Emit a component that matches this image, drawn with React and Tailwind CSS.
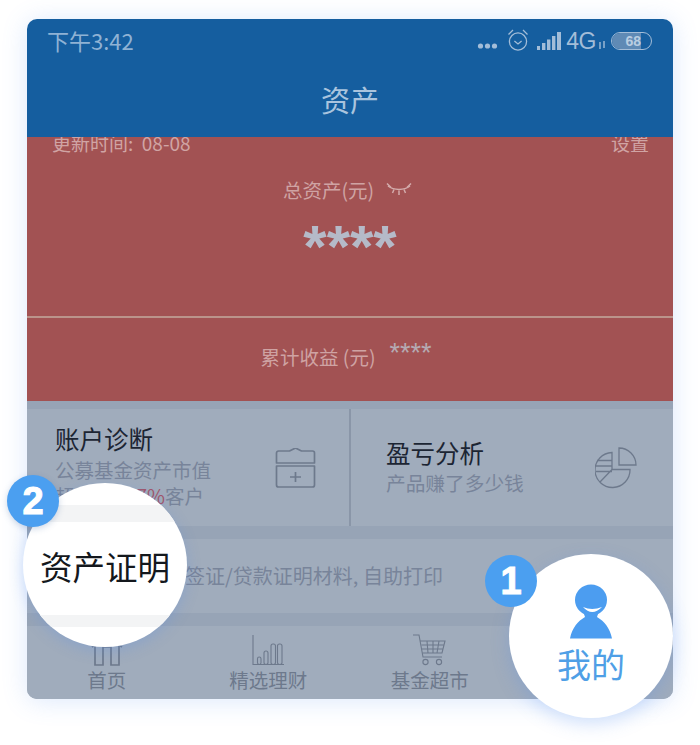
import React from 'react'

const CJK = 'font-["Noto_Sans_CJK_SC","Noto_Sans",sans-serif]'

function StatusIcons() {
  return (
    <div className="flex items-center">
      {/* dots */}
      <svg width="22" height="8" viewBox="0 0 22 8" fill="#a3bdd8" className="mt-[9px] mr-[7px]">
        <circle cx="3.5" cy="4" r="2.6" />
        <circle cx="10.5" cy="4" r="2.6" />
        <circle cx="17.5" cy="4" r="2.6" />
      </svg>
      {/* alarm */}
      <svg width="24" height="24" viewBox="0 0 24 24" fill="none" stroke="#a3bdd8" strokeWidth="1.3" className="mb-[3px] mr-[7px]">
        <circle cx="12" cy="13.5" r="8.6" />
        <path d="M8.4 13l3.6 3 3.6-3" />
        <path d="M2.5 6.5L7 2M21.5 6.5L17 2" />
      </svg>
      {/* signal */}
      <svg width="25" height="18" viewBox="0 0 25 18" fill="#a3bdd8" className="mr-[4px]">
        <rect x="0" y="14" width="3" height="4" />
        <rect x="5" y="11" width="3.4" height="7" />
        <rect x="10" y="7.5" width="3.4" height="10.5" />
        <rect x="15" y="4" width="3.4" height="14" />
        <rect x="20" y="0" width="4" height="18" />
      </svg>
      <span className="text-[#a3bdd8] text-[23px] leading-none font-['Liberation_Sans',sans-serif] tracking-[-0.5px]">4G</span>
      {/* up and down arrows */}
      <svg width="8" height="8" viewBox="0 0 8 8" stroke="#a3bdd8" strokeWidth="1.4" className="mt-[7px] ml-[2px] mr-[5px]">
        <path d="M2 1v7M6 0v7" />
      </svg>
      {/* battery */}
      <div className="w-[41px] h-[18px] rounded-full border-[1.5px] border-[#a3bdd8] flex items-center overflow-hidden">
        <div className="w-[29px] h-full bg-[#5f8ab5] rounded-l-full flex items-center justify-end">
          <span className="text-[#b9cde1] text-[14px] font-bold leading-none font-['Liberation_Sans',sans-serif]">68</span>
        </div>
      </div>
    </div>
  )
}

function ClosedEye() {
  return (
    <svg width="26" height="14" viewBox="0 0 26 14" fill="none" stroke="#d3abab" strokeWidth="1.5">
      <path d="M2 3c6 4.5 16 4.5 22 0" />
      <path d="M1 0.5l4 4M25 0.5l-4 4M8 6.5L6.5 10M18 6.5L19.5 10M13 7.5V12" />
    </svg>
  )
}

function CalendarPlus() {
  return (
    <svg width="42" height="42" viewBox="0 0 42 42" fill="none" stroke="#6d798c" strokeWidth="1.7" strokeLinejoin="round">
      <path d="M1.5 15V5a2 2 0 0 1 2-2h11l6-3 6 3h11a2 2 0 0 1 2 2v10z" />
      <path d="M1.5 18h38v19a2 2 0 0 1-2 2h-34a2 2 0 0 1-2-2z" />
      <path d="M20.5 24v10M15 29h11" />
    </svg>
  )
}

function PieIcon() {
  return (
    <svg width="42" height="42" viewBox="0 0 42 42" fill="none" stroke="#6d798c" strokeWidth="1.3">
      <path d="M24 1a17 17 0 0 1 17 17H24z" />
      <path d="M17 5.5v17h18A17.5 17.5 0 1 1 17 5.5z" />
      <path d="M2 13.5h15M1 19h16M1 24.5h16M5 35l12-12.5" />
    </svg>
  )
}

function HomeIcon() {
  return (
    <svg width="32" height="31" viewBox="0 0 32 31" fill="none" stroke="#6d798c" strokeWidth="1.7">
      <path d="M1 12L16 1l15 11" />
      <path d="M4 9v21h8V12h8v18h8V9" />
    </svg>
  )
}

function BarsIcon() {
  return (
    <svg width="32" height="31" viewBox="0 0 32 31" fill="none" stroke="#6d798c" strokeWidth="1.1">
      <path d="M1 0v29.5h31" />
      <rect x="5.5" y="22" width="3.5" height="7.5" rx="1.7" />
      <rect x="12" y="16" width="4" height="13.5" rx="2" />
      <rect x="19" y="9" width="4.5" height="20.5" rx="2" />
      <rect x="25.5" y="9" width="4.5" height="20.5" rx="2" />
    </svg>
  )
}

function CartIcon() {
  return (
    <svg width="33" height="32" viewBox="0 0 33 32" fill="none" stroke="#6d798c" strokeWidth="1.1">
      <path d="M0 1h6l4 22h19" />
      <path d="M7 7h25l-3 12H9.5M14 7l1 12M20 7v12M26 7l-2 12M8.5 11h22.5M9 15h21" />
      <circle cx="12.5" cy="28" r="2.6" />
      <circle cx="26" cy="28" r="2.6" />
    </svg>
  )
}

function PersonIcon() {
  return (
    <svg width="42" height="55" viewBox="0 0 42 55" fill="#4c9df0">
      <ellipse cx="21" cy="16" rx="16" ry="15.5" />
      <path d="M0 54.5C2 44 8 37 15 33l-2-6h16l-2 6c7 4 13 11 15 21.5z" />
      <path d="M13 23Q22 27 32 23Q22 33 13 23z" fill="#ffffff" />
    </svg>
  )
}

function TabItem({ icon, label }) {
  return (
    <div className="flex-1 flex justify-center">
      <div className="mr-[2px] flex flex-col items-center">
        <div className="h-[40px] flex items-end">{icon}</div>
        <span className="text-[#6d798c] text-[19.5px] leading-[28px]">{label}</span>
      </div>
    </div>
  )
}

export default function App() {
  return (
    <div className={`relative w-[700px] h-[745px] bg-white pt-[19px] pl-[27px] overflow-hidden ${CJK}`}>
      <div className="w-[646px] h-[680px] rounded-[10px] overflow-hidden flex flex-col shadow-[0_2px_26px_rgba(80,140,240,0.2)]">
        {/* header */}
        <div className="h-[118px] bg-[#155e9f] shrink-0 z-10">
          <div className="h-[44px] pl-[20px] pr-[21px] flex items-center justify-between">
            <span className="text-[#8fb2d4] text-[22px] leading-none mb-[2px]">下午3:42</span>
            <StatusIcons />
          </div>
          <div className="h-[74px] flex items-center justify-center text-[#a9c4de] text-[29px]">资产</div>
        </div>

        {/* assets */}
        <div className="h-[264px] bg-[#a25253] shrink-0 flex flex-col">
          <div className="h-[24px] -mt-[6px] pl-[25px] pr-[24px] flex items-center justify-between text-[#d0a4a4] text-[19px]">
            <span className="whitespace-pre">更新时间:  08-08</span>
            <span>设置</span>
          </div>
          <div className="mt-[23px] h-[24px] pr-[5px] flex items-center justify-center gap-[12px] text-[#cfa3a3] text-[19.5px]">
            <span>总资产(元)</span>
            <ClosedEye />
          </div>
          <div className="h-[70px] mt-[1px] flex items-center justify-center text-[#b5bac8] text-[60px] leading-none font-bold font-['Liberation_Sans',sans-serif]">
            <span className="mt-[18px]">****</span>
          </div>
          <div className="mt-[43px] h-[2px] bg-[#bb948b]" />
          <div className="flex-1 pb-[6px] pr-[8px] flex items-center justify-center gap-[14px]">
            <span className="text-[#cfa3a3] text-[19.5px]">累计收益 (元)</span>
            <span className="text-[#b5aab2] text-[27px] leading-none mb-[6px] font-['Liberation_Sans',sans-serif]">****</span>
          </div>
        </div>

        {/* lower panels */}
        <div className="flex-1 bg-[#97a4b6] flex flex-col">
          <div className="mt-[8px] h-[117px] flex">
            <div className="w-[322px] bg-[#a0acbc] pl-[28px] pr-[32px] flex items-center justify-between">
              <div className="flex flex-col pb-[4px]">
                <span className="text-[#1c2533] text-[24.5px] leading-[32px] mb-[2px]">账户诊断</span>
                <span className="text-[#78849a] text-[19.5px] leading-[26px]">公募基金资产市值</span>
                <span className="text-[#78849a] text-[19.5px] leading-[26px] whitespace-nowrap">
                  超过 <span className="text-[#a0566a]">97.77%</span>客户
                </span>
              </div>
              <div className="mt-[2px]">
                <CalendarPlus />
              </div>
            </div>
            <div className="w-[2px] bg-[#8a96a8]" />
            <div className="flex-1 bg-[#a0acbc] pl-[35px] pr-[36px] flex items-center justify-between">
              <div className="flex flex-col pb-[2px]">
                <span className="text-[#1c2533] text-[24.5px] leading-[32px]">盈亏分析</span>
                <span className="text-[#78849a] text-[19.7px] leading-[28px]">产品赚了多少钱</span>
              </div>
              <PieIcon />
            </div>
          </div>
          <div className="mt-[13px] h-[74px] bg-[#a0acbc] pl-[158px] flex items-center text-[#78849a] text-[20px]">
            <span>签证/贷款证明材料, 自助打印</span>
          </div>
          <div className="mt-[13px] flex-1 bg-[#a0acbc] flex">
            <TabItem icon={<HomeIcon />} label="首页" />
            <TabItem icon={<BarsIcon />} label="精选理财" />
            <TabItem icon={<CartIcon />} label="基金超市" />
            <div className="flex-1" />
          </div>
        </div>
      </div>

      {/* highlight: asset proof */}
      <div className="absolute left-[23px] top-[483px] w-[164px] h-[164px] rounded-full bg-white overflow-hidden flex flex-col shadow-[0_4px_14px_rgba(80,140,240,0.25)]">
        <div className="mt-[22px] h-[17px] bg-[#f3f4f5]" />
        <div className="flex-1 flex items-center justify-center text-[#14181d] text-[32.5px] leading-none pb-[5px]">资产证明</div>
        <div className="h-[12px] bg-[#f3f4f5] mb-[20px]" />
      </div>
      <div className="absolute left-[7px] top-[475px] w-[52px] h-[52px] rounded-full bg-[#4b9ff0] flex items-center justify-center text-white text-[38px] font-bold leading-none font-['Liberation_Sans',sans-serif] [-webkit-text-stroke:1px_white] shadow-[0_2px_6px_rgba(60,100,160,0.25)]">2</div>

      {/* highlight: my tab */}
      <div className="absolute left-[509px] top-[554px] w-[164px] h-[164px] rounded-full bg-white flex flex-col items-center pt-[30px] shadow-[0_6px_18px_rgba(80,140,240,0.25)]">
        <PersonIcon />
        <span className="text-[#4f9fe6] text-[34px] leading-[44px] mt-[3px]">我的</span>
      </div>
      <div className="absolute left-[485px] top-[555px] w-[52px] h-[52px] rounded-full bg-[#4b9ff0] flex items-center justify-center text-white text-[38px] font-bold leading-none font-['Liberation_Sans',sans-serif] [-webkit-text-stroke:1px_white]">1</div>
    </div>
  )
}
